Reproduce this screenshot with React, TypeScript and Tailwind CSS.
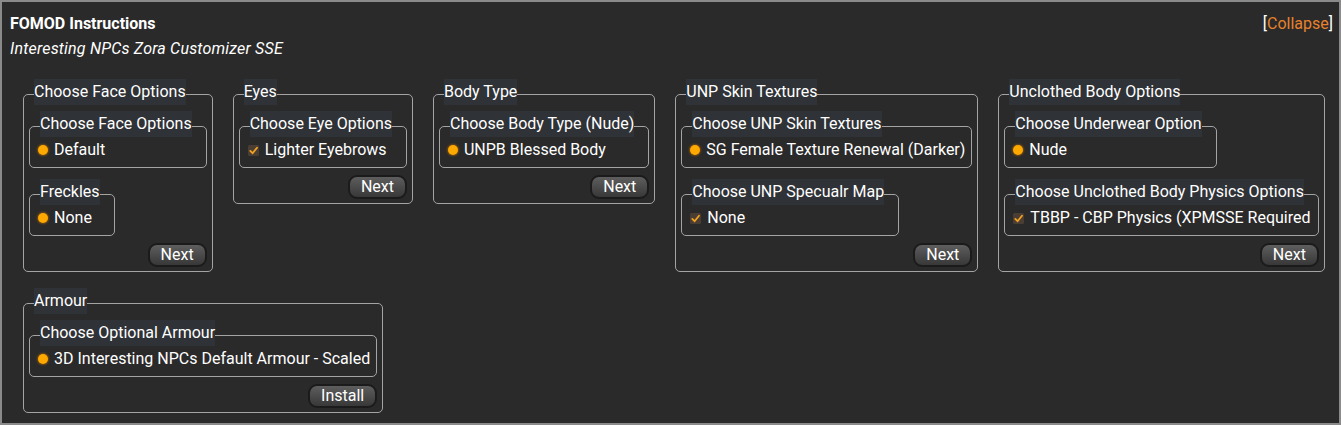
import { ReactNode } from 'react';

type Choice = { label: string; kind: 'radio' | 'check' };
type Step = { title: string; choices: Choice[] };
type Group = { title: string; steps: Step[]; button: string };

const GROUPS: Group[] = [
  {
    title: 'Choose Face Options',
    steps: [
      { title: 'Choose Face Options', choices: [{ label: 'Default', kind: 'radio' }] },
      { title: 'Freckles', choices: [{ label: 'None', kind: 'radio' }] },
    ],
    button: 'Next',
  },
  {
    title: 'Eyes',
    steps: [{ title: 'Choose Eye Options', choices: [{ label: 'Lighter Eyebrows', kind: 'check' }] }],
    button: 'Next',
  },
  {
    title: 'Body Type',
    steps: [{ title: 'Choose Body Type (Nude)', choices: [{ label: 'UNPB Blessed Body', kind: 'radio' }] }],
    button: 'Next',
  },
  {
    title: 'UNP Skin Textures',
    steps: [
      { title: 'Choose UNP Skin Textures', choices: [{ label: 'SG Female Texture Renewal (Darker)', kind: 'radio' }] },
      { title: 'Choose UNP Specualr Map', choices: [{ label: 'None', kind: 'check' }] },
    ],
    button: 'Next',
  },
  {
    title: 'Unclothed Body Options',
    steps: [
      { title: 'Choose Underwear Option', choices: [{ label: 'Nude', kind: 'radio' }] },
      {
        title: 'Choose Unclothed Body Physics Options',
        choices: [{ label: 'TBBP - CBP Physics (XPMSSE Required', kind: 'check' }],
      },
    ],
    button: 'Next',
  },
  {
    title: 'Armour',
    steps: [
      {
        title: 'Choose Optional Armour',
        choices: [{ label: '3D Interesting NPCs Default Armour - Scaled', kind: 'radio' }],
      },
    ],
    button: 'Install',
  },
];

function Mark({ kind }: { kind: Choice['kind'] }) {
  if (kind === 'radio') {
    return (
      <span className="h-[10px] w-[10px] shrink-0 rounded-full bg-[#ffa800] shadow-[0_0_2px_1px_rgba(190,110,0,0.55)]" />
    );
  }
  return (
    <svg width="11" height="11" viewBox="0 0 11 11" className="shrink-0">
      <rect x="0" y="0" width="11" height="11" rx="1.5" fill="#4a3e34" />
      <path d="M2.3 5.9 L4.6 8.2 L9 2.8" fill="none" stroke="#f3a21f" strokeWidth="1.8" strokeLinecap="round" />
    </svg>
  );
}

function Box({ title, children, outer }: { title: string; children: ReactNode; outer?: boolean }) {
  return (
    <fieldset
      className={
        outer
          ? 'flex min-w-0 flex-col items-start rounded-[5px] border border-[#a4a4a4] px-[5px] pt-[6px] pb-[4px]'
          : 'w-fit min-w-0 rounded-[5px] border border-[#a4a4a4] pl-[8px] pr-[6px] pb-[6px]'
      }
    >
      <legend
        className={
          outer
            ? 'relative top-[-2px] ml-[5px] mr-[10px] bg-[#2f3236] leading-[26px]'
            : 'relative top-[-2px] ml-[2px] mr-[8px] bg-[#2f3236] leading-[26px]'
        }
      >
        {title}
      </legend>
      {children}
    </fieldset>
  );
}

export default function App() {
  return (
    <div className="h-[425px] w-[1341px] border-2 border-[#8a8a8a] bg-[#2a2a2a] font-['Roboto',sans-serif] text-[16px] text-white">
      <div className="flex justify-between pl-[8px] pr-[6px] pt-[9px]">
        <div>
          <div className="font-bold leading-[25px]">FOMOD Instructions</div>
          <div className="italic leading-[25px] tracking-[0.2px]">Interesting NPCs Zora Customizer SSE</div>
        </div>
        <div className="leading-[25px]">
          [<span className="text-[#e8812c]">Collapse</span>]
        </div>
      </div>

      <div className="mt-[20px] flex flex-wrap items-start gap-x-[20px] gap-y-[18px] pl-[21px]">
        {GROUPS.map((g) => (
          <Box key={g.title + g.button + g.steps.length} title={g.title} outer>
            <div className="flex flex-col items-start gap-[13px]">
              {g.steps.map((s) => (
                <Box key={s.title} title={s.title}>
                  {s.choices.map((c) => (
                    <div key={c.label} className="flex items-center gap-[6px] whitespace-nowrap leading-[22px]">
                      <Mark kind={c.kind} />
                      <span>{c.label}</span>
                    </div>
                  ))}
                </Box>
              ))}
            </div>
            <div className="mt-[7px] flex w-full justify-end">
              <button className="rounded-[9px] border-2 border-[#1b1b1b] bg-linear-to-b from-[#5e5e5e] to-[#383838] px-[11px] leading-[20px] text-white">
                {g.button}
              </button>
            </div>
          </Box>
        ))}
      </div>
    </div>
  );
}
